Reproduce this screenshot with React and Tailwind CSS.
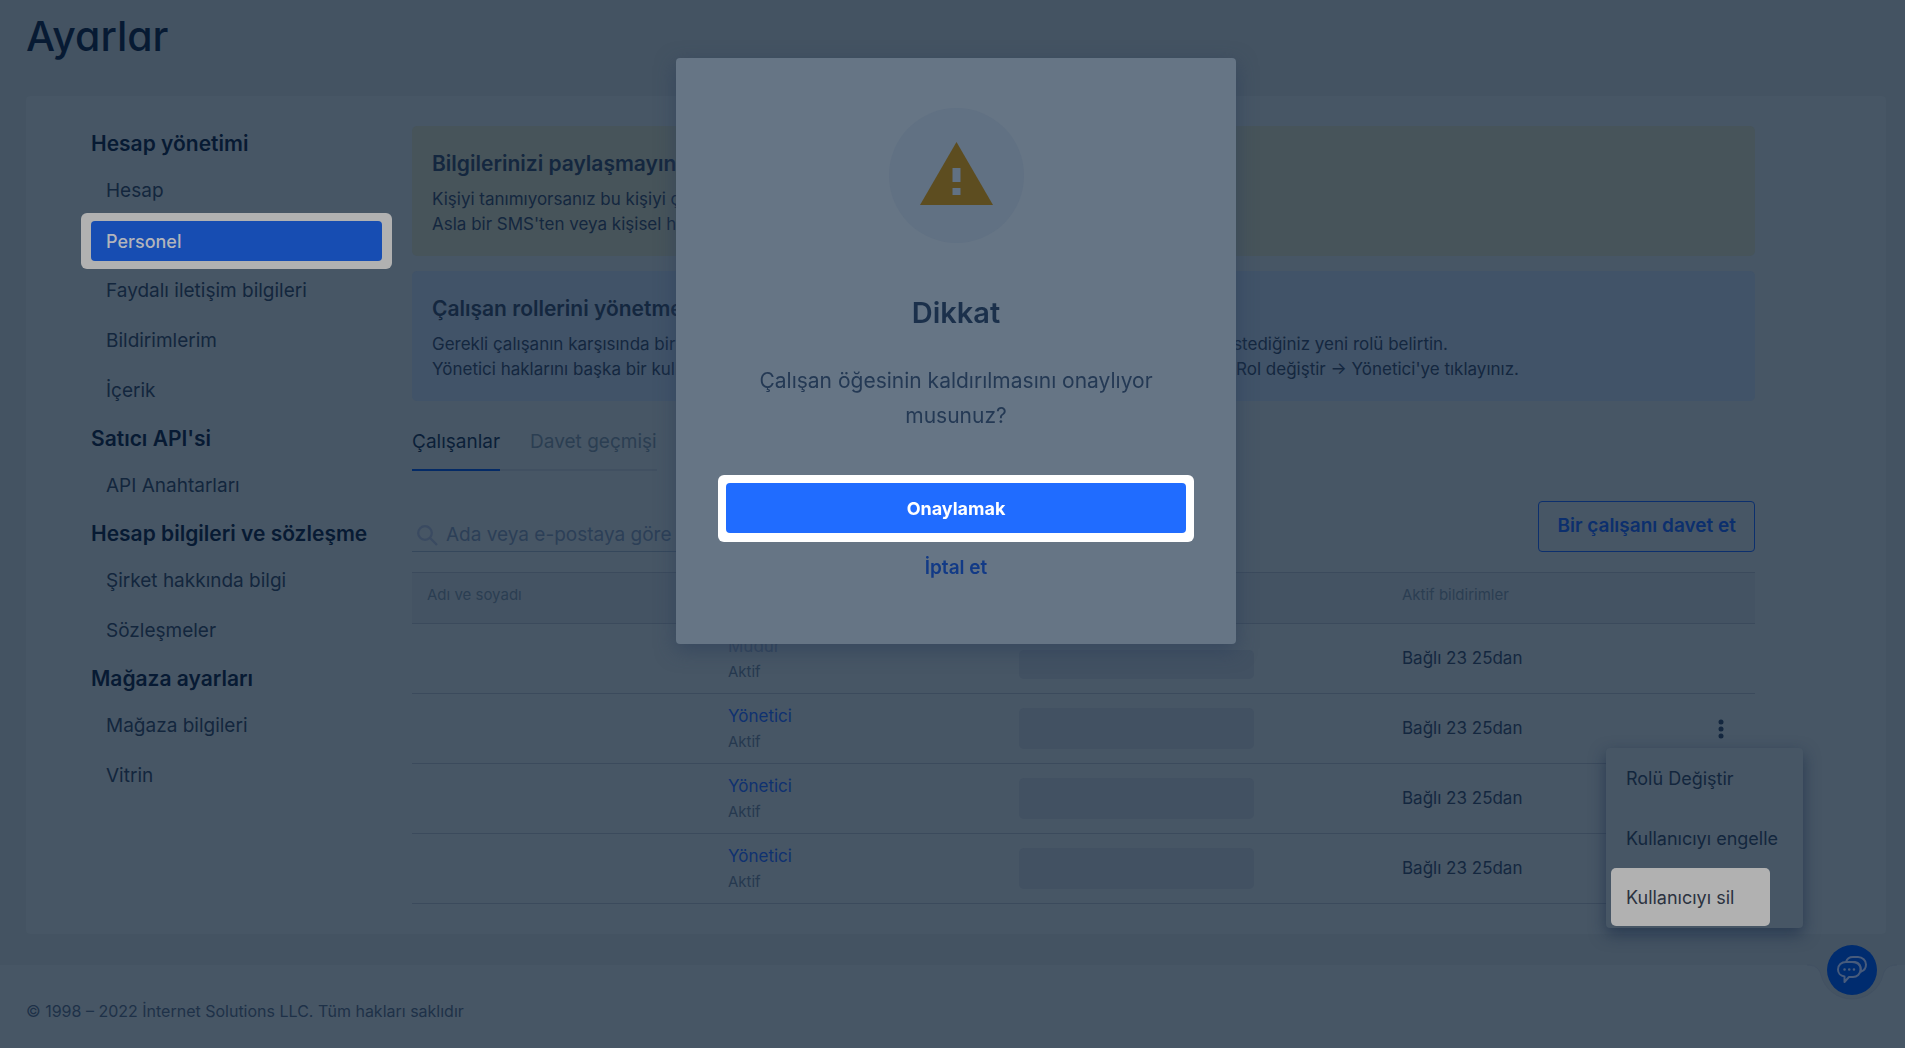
import React from "react";

const MENU = [
  { title: "Hesap yönetimi", items: ["Hesap", "Personel", "Faydalı iletişim bilgileri", "Bildirimlerim", "İçerik"] },
  { title: "Satıcı API'si", items: ["API Anahtarları"] },
  { title: "Hesap bilgileri ve sözleşme", items: ["Şirket hakkında bilgi", "Sözleşmeler"] },
  { title: "Mağaza ayarları", items: ["Mağaza bilgileri", "Vitrin"] },
];

const ROWS = [
  { role: "Müdür", muted: true },
  { role: "Yönetici", menu: true },
  { role: "Yönetici" },
  { role: "Yönetici" },
];

function Sidebar() {
  return (
    <nav aria-label="Ayarlar" className="w-[291px] shrink-0 pt-[6px]">
      {MENU.map((group) => (
        <section key={group.title} className="mb-4">
          <h2 className="mb-[15px] text-[21px] leading-6 font-semibold text-[#071a33]">{group.title}</h2>
          <ul className="flex flex-col gap-[10px]">
            {group.items.map((item) =>
              item === "Personel" ? (
                <li key={item} className="relative h-10">
                  <div className="absolute -inset-x-[10px] -inset-y-2 rounded-md bg-[#b1b1b1]" />
                  <a href="#" aria-current="page" className="relative flex h-10 items-center rounded bg-[#174db2] px-[15px] text-[18px] font-medium text-[#b1b4bb]">
                    {item}
                  </a>
                </li>
              ) : (
                <li key={item}>
                  <a href="#" className="flex h-10 items-center px-[15px] text-[19px] text-[#13263d]">{item}</a>
                </li>
              )
            )}
          </ul>
        </section>
      ))}
    </nav>
  );
}

function Notice({ tone, title, lines }) {
  return (
    <section className={`mb-[15px] overflow-hidden rounded-[5px] px-5 pt-[26px] pb-[19px] text-[#14273f] ${tone}`}>
      <h3 className="text-[21px] leading-6 font-semibold">{title}</h3>
      <div className="mt-[11px] text-[17px] leading-[25px] whitespace-nowrap">
        {lines.map((line) => (
          <p key={line}>{line}</p>
        ))}
      </div>
    </section>
  );
}

function RowMenu() {
  return (
    <div className="absolute top-[54px] -right-12 z-10 flex w-[197px] flex-col rounded-[4px] bg-[#475665] text-left text-[18px] whitespace-nowrap text-[#13263d] shadow-[0_6px_16px_rgba(20,38,66,0.6)]">
      <button className="h-[60px] px-5 text-left">Rolü Değiştir</button>
      <button className="h-[60px] px-5 text-left">Kullanıcıyı engelle</button>
      <div className="h-[60px] pl-[5px]">
        <button className="h-[58px] w-[159px] rounded-[5px] bg-[#b1b1b1] px-[15px] text-left text-[#2b3240]">Kullanıcıyı sil</button>
      </div>
    </div>
  );
}

function StaffTable() {
  return (
    <table className="mt-5 w-full table-fixed border-separate border-spacing-0 text-left">
      <colgroup>
        <col className="w-[301px]" />
        <col className="w-[291px]" />
        <col className="w-[383px]" />
        <col />
        <col className="w-[68px]" />
      </colgroup>
      <thead>
        <tr className="h-[52px] bg-[#445363] align-top text-[15px] leading-5 text-[#2b3e52]">
          <th className="border-y border-[#3b4a5c] px-[15px] pt-3 font-normal">Adı ve soyadı</th>
          <th className="border-y border-[#3b4a5c] px-[15px] pt-3 font-normal">Rol</th>
          <th className="border-y border-[#3b4a5c] px-[15px] pt-3 font-normal">E-posta</th>
          <th className="border-y border-[#3b4a5c] px-[15px] pt-3 font-normal">Aktif bildirimler</th>
          <td className="border-y border-[#3b4a5c]" />
        </tr>
      </thead>
      <tbody>
        {ROWS.map((row, i) => (
          <tr key={i} className="h-[70px]">
            <td className="border-b border-[#3b4a5c]" />
            <td className="border-b border-[#3b4a5c] px-[15px] leading-[25px]">
              {row.muted ? (
                <div className="text-[17px] text-[#32445b]">{row.role}</div>
              ) : (
                <a href="#" className="block text-[17px] text-[#0f3170]">{row.role}</a>
              )}
              <div className="text-[15px] text-[#26394f]">Aktif</div>
            </td>
            <td className="border-b border-[#3b4a5c] px-[15px]">
              <div className={row.muted ? "mt-3 h-[29px] w-[235px] rounded-[5px] bg-[#425162]" : "h-[41px] w-[235px] rounded-[5px] bg-[#425162]"} />
            </td>
            <td className="border-b border-[#3b4a5c] px-[15px] text-[17px] text-[#14273f]">Bağlı 23 25dan</td>
            <td className="relative border-b border-[#3b4a5c] p-0 text-center">
              {row.menu && (
                <>
                  <button aria-label="İşlemler" className="inline-flex h-10 w-10 items-center justify-center align-middle">
                    <svg width="6" height="20" viewBox="0 0 6 20" fill="#14273f">
                      <circle cx="3" cy="3" r="2.5" />
                      <circle cx="3" cy="10" r="2.5" />
                      <circle cx="3" cy="17" r="2.5" />
                    </svg>
                  </button>
                  <RowMenu />
                </>
              )}
            </td>
          </tr>
        ))}
      </tbody>
    </table>
  );
}

function ConfirmDialog() {
  return (
    <div className="fixed inset-0 z-20 flex items-start justify-center pt-[58px] pl-[7px]">
      <div role="dialog" aria-modal="true" aria-labelledby="dialog-title" className="flex w-[560px] flex-col items-center rounded-[4px] bg-[#667585] px-[42px] pt-[50px] pb-16 text-center shadow-[0_6px_20px_rgba(44,62,90,0.6)]">
        <div className="flex h-[135px] w-[135px] items-center justify-center rounded-full bg-[#617183] pb-1">
          <svg width="73" height="63" viewBox="0 0 73 63">
            <path d="M36.5 0 73 63H0Z" fill="#5d4d20" />
            <path d="M32.5 26h8v14h-8zM32.5 46h8v7h-8z" fill="#617183" />
          </svg>
        </div>
        <h2 id="dialog-title" className="mt-[50px] text-[29px] leading-10 font-semibold text-[#1b304b]">Dikkat</h2>
        <p className="mt-[30px] px-8 text-[21px] leading-[35px] text-[#243954]">Çalışan öğesinin kaldırılmasını onaylıyor musunuz?</p>
        <div className="mt-[42px] w-full rounded-md bg-white px-2 pt-2 pb-[9px]">
          <button className="block h-[50px] w-full rounded-[4px] bg-[#206cff] text-[18px] font-bold text-white">Onaylamak</button>
        </div>
        <button className="mt-[14px] text-[19px] leading-6 font-semibold text-[#123a86]">İptal et</button>
      </div>
    </div>
  );
}

function Footer() {
  return (
    <footer className="relative mt-[31px] flex-1 bg-[#475665] px-[26px] pt-[34px] text-[16px] leading-6 text-[#1e3148]">
      © 1998 – 2022 İnternet Solutions LLC. Tüm hakları saklıdır
      <svg className="absolute -top-px right-2" width="90" height="40" viewBox="0 -1 90 40" fill="#445362">
        <path d="M0-1V0C8 0 12 3 14 10A32 32 0 0 0 76 10C78 3 82 0 90 0V-1Z" />
        <path d="M0 0C8 0 12 3 14 10A32 32 0 0 0 76 10C78 3 82 0 90 0" fill="none" stroke="#415062" strokeOpacity="0.7" />
      </svg>
      <button aria-label="Sohbet" className="absolute -top-5 right-7 flex h-[50px] w-[50px] items-center justify-center rounded-full bg-[#002c6f]">
        <svg width="30" height="28" viewBox="0 0 30 28" fill="none" stroke="#475b7c" strokeWidth="2" strokeLinecap="round" strokeLinejoin="round">
          <path d="M9 6C10 2.500 13 1 16 1H21C25.500 1 29 4.500 29 8.500C29 12 27 14.500 24 15.500" />
          <path d="M9 6H15C20 6 23.500 9 23.500 13.500C23.500 18 20 21 16 21H12L7.500 26V20.500C3.500 20 1 17 1 13.500C1 9 4.500 6 9 6Z" />
          <path d="M12 6H18C22 6.500 24.500 10 24 15.500" />
          <path d="M7.500 13.500h.1M12.200 13.500h.1M16.900 13.500h.1" strokeWidth="2.500" />
        </svg>
      </button>
    </footer>
  );
}

export default function App() {
  return (
    <div className="flex min-h-screen flex-col overflow-x-hidden bg-[#445362] font-['Inter',sans-serif]">
      <h1 className="px-[26px] pt-[11px] text-[41px] leading-[50px] font-medium text-[#071a33] [font-feature-settings:'cv11']">Ayarlar</h1>
      <main className="mt-[35px] mr-[19px] ml-[26px] flex gap-[30px] rounded-[4px] bg-[#475665] pt-[30px] pr-[131px] pb-[30px] pl-[65px]">
        <Sidebar />
        <div className="min-w-0 flex-1">
          <Notice
            tone="bg-[#47545a]"
            title="Bilgilerinizi paylaşmayın"
            lines={["Kişiyi tanımıyorsanız bu kişiyi çalışan olarak eklemeyin.", "Asla bir SMS'ten veya kişisel hesabınızdan kod paylaşmayın."]}
          />
          <Notice
            tone="bg-[#415368]"
            title="Çalışan rollerini yönetme"
            lines={[
              "Gerekli çalışanın karşısında bir menü açın, açılan listeden Rol değiştir'i seçin ve çalışanınıza atamak istediğiniz yeni rolü belirtin.",
              "Yönetici haklarını başka bir kullanıcıya devretmek için söz konusu çalışanın karşısındaki menüden ⋮ Rol değiştir → Yönetici'ye tıklayınız.",
            ]}
          />
          <div role="tablist" className="mt-7 flex text-[19px] leading-[26px]">
            <button role="tab" aria-selected="true" className="border-b-2 border-[#042a66] pb-[14px] text-[#0b1f38]">Çalışanlar</button>
            <button role="tab" aria-selected="false" className="border-b-2 border-[#415061] pb-[14px] pl-[30px] text-[#2b3e52]">Davet geçmişi</button>
          </div>
          <div className="mt-[30px] flex items-end justify-between">
            <label className="flex h-9 w-[500px] items-center gap-2 border-b border-[#35475b] pt-[3px] pl-[5px]">
              <svg width="21" height="21" viewBox="0 0 21 21" fill="none" stroke="#3a4a61" strokeWidth="2.200">
                <circle cx="8" cy="8" r="6.800" />
                <path d="M12.800 12.800 20 20" />
              </svg>
              <input aria-label="Ara" placeholder="Ada veya e-postaya göre ara" className="min-w-0 flex-1 bg-transparent text-[19px] outline-none placeholder:text-[#2c3f57]" />
            </label>
            <button className="h-[51px] rounded-[4px] border border-[#0c2f6d] px-[18px] text-[19px] font-semibold text-[#0c2f6d]">Bir çalışanı davet et</button>
          </div>
          <StaffTable />
        </div>
      </main>
      <Footer />
      <ConfirmDialog />
    </div>
  );
}
